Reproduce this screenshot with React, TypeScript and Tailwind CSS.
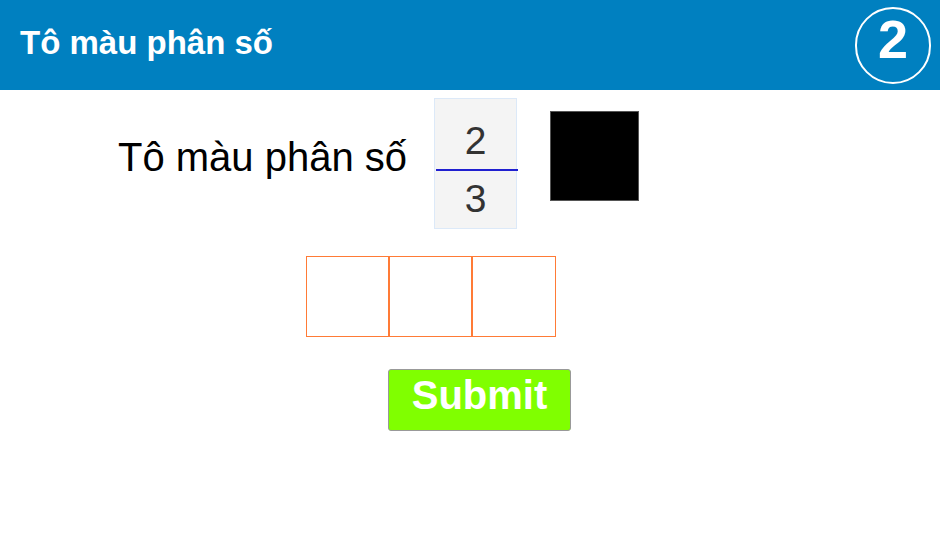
export default function App() {
  const font = { fontFamily: '"Liberation Sans", Arial, sans-serif' };
  return (
    <div className="w-[940px] h-[548px] bg-white" style={font}>
      <div className="h-[90px] bg-[#0080c0] flex items-center justify-between pl-[20px] pr-[9px]">
        <div className="text-white font-bold text-[33px] leading-none pb-[6px]">Tô màu phân số</div>
        <div className="w-[76px] h-[77px] mt-[1px] rounded-full border-2 border-white flex items-center justify-center text-white font-bold text-[54px] leading-none pb-[14px]">
          2
        </div>
      </div>
      <div className="flex items-start mt-[8px]">
        <div className="ml-[118px] mt-[36px] text-[40px] leading-[46px] text-black">Tô màu phân số</div>
        <div className="ml-[27px] w-[83px] h-[131px] bg-[#f4f4f4] border border-[#dce9f8] flex flex-col">
          <div className="h-[70px] flex items-end justify-center text-[39px] leading-none text-[#333] pb-[9px]">2</div>
          <div className="h-[1.5px] bg-[#2020d0] mx-[1px] -mr-[2px]"></div>
          <div className="flex-1 flex items-start justify-center text-[39px] leading-none text-[#333] pt-[8px]">3</div>
        </div>
        <div className="ml-[33px] mt-[13px] w-[89px] h-[90px] bg-black border border-[#555]"></div>
      </div>
      <div className="flex ml-[306px] mt-[27px]">
        <div className="w-[83px] h-[81px] border border-[#ff7b36]"></div>
        <div className="w-[83px] h-[81px] border border-[#ff7b36]"></div>
        <div className="w-[84px] h-[81px] border border-[#ff7b36]"></div>
      </div>
      <div className="ml-[388px] mt-[32px] w-[183px] h-[62px] bg-[#80ff00] border border-[#999] rounded-[3px] flex items-center justify-center text-white font-bold text-[40px] leading-none pb-[10px]">
        Submit
      </div>
    </div>
  );
}
